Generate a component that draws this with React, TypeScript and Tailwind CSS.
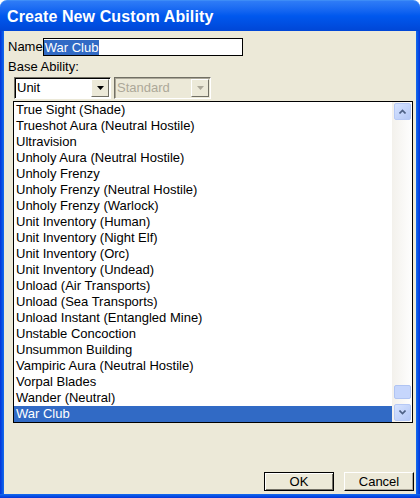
import React from "react"

const items = [
  "True Sight (Shade)",
  "Trueshot Aura (Neutral Hostile)",
  "Ultravision",
  "Unholy Aura (Neutral Hostile)",
  "Unholy Frenzy",
  "Unholy Frenzy (Neutral Hostile)",
  "Unholy Frenzy (Warlock)",
  "Unit Inventory (Human)",
  "Unit Inventory (Night Elf)",
  "Unit Inventory (Orc)",
  "Unit Inventory (Undead)",
  "Unload (Air Transports)",
  "Unload (Sea Transports)",
  "Unload Instant (Entangled Mine)",
  "Unstable Concoction",
  "Unsummon Building",
  "Vampiric Aura (Neutral Hostile)",
  "Vorpal Blades",
  "Wander (Neutral)",
  "War Club",
]

function Arrow({ color = "#000" }: { color?: string }) {
  return (
    <svg width="7" height="4" viewBox="0 0 7 4">
      <path d="M0 0h7L3.5 4z" fill={color} />
    </svg>
  )
}

function ComboButton({ disabled }: { disabled?: boolean }) {
  return (
    <div className="w-[18px] h-[18px] bg-[#ece9d8] border border-t-white border-l-white border-r-[#716f64] border-b-[#716f64] flex items-center justify-center">
      <Arrow color={disabled ? "#aca899" : "#000"} />
    </div>
  )
}

function ScrollBtn({ up }: { up?: boolean }) {
  return (
    <div className="w-[17px] h-[17px] rounded-[2px] border border-[#b6c9f5] bg-gradient-to-br from-[#d6e3ff] to-[#b4c8f6] flex items-center justify-center">
      <svg width="7" height="5" viewBox="0 0 7 5">
        <path
          d={up ? "M0.5 4.5L3.5 1.5L6.5 4.5" : "M0.5 0.5L3.5 3.5L6.5 0.5"}
          stroke="#4d6185"
          strokeWidth="1.6"
          fill="none"
        />
      </svg>
    </div>
  )
}

function PushButton({ label, primary }: { label: string; primary?: boolean }) {
  return (
    <div
      className={
        "w-[70px] h-[19px] bg-[#ece9d8] flex items-center justify-center text-[13px] leading-none " +
        (primary
          ? "border border-black shadow-[inset_1px_1px_0_#fff,inset_-1px_-1px_0_#716f64]"
          : "border border-t-white border-l-white border-r-black border-b-black shadow-[inset_-1px_-1px_0_#aca899]")
      }
    >
      {label}
    </div>
  )
}

export default function App() {
  return (
    <div
      className="w-[420px] h-[498px] flex flex-col bg-white text-black"
      style={{ fontFamily: '"Liberation Sans", Arial, sans-serif' }}
    >
      <div className="h-[31px] shrink-0 rounded-t-[7px] bg-gradient-to-b from-[#2f7cf6] via-[#0058ee] to-[#0046d6] border-t border-[#3d8cf7] flex items-center pl-[7px]">
        <span className="text-white font-bold text-[16px] tracking-[0.1px] pt-[1px]">
          Create New Custom Ability
        </span>
      </div>

      <div className="flex flex-1">
        <div className="w-[4px] bg-gradient-to-r from-[#0831d9] to-[#166aee]" />
        <div className="flex-1 bg-[#ece9d8] flex flex-col text-[13px]">
          <div className="flex items-center mt-[7px] ml-[4px] h-[18px]">
            <span>Name</span>
            <div className="w-[200px] h-[18px] bg-white border border-black flex items-center">
              <span className="bg-[#316ac5] text-white leading-[15px] px-[1px]">War Club</span>
            </div>
          </div>

          <div className="ml-[4px] mt-[3px] leading-[16px]">Base Ability:</div>

          <div className="flex mt-[2px] ml-[10px] gap-[3px]">
            <div className="w-[97px] h-[22px] bg-white border border-t-[#716f64] border-l-[#716f64] border-r-white border-b-white flex items-center justify-between pl-[2px] pr-[1px] shadow-[inset_1px_1px_0_#000]">
              <span>Unit</span>
              <ComboButton />
            </div>
            <div className="w-[97px] h-[22px] bg-[#ece9d8] border border-t-[#716f64] border-l-[#716f64] border-r-white border-b-white flex items-center justify-between pl-[2px] pr-[1px] shadow-[inset_1px_1px_0_#aca899]">
              <span className="text-[#aca899]">Standard</span>
              <ComboButton disabled />
            </div>
          </div>

          <div className="ml-[9px] mt-[2px] w-[400px] h-[322px] bg-white border border-black flex">
            <div className="flex-1 flex flex-col">
              {items.map((item, i) => (
                <div
                  key={item}
                  className={
                    "h-[16px] leading-[16px] pl-[2px] whitespace-nowrap " +
                    (i === items.length - 1 ? "bg-[#316ac5] text-white" : "")
                  }
                >
                  {item}
                </div>
              ))}
            </div>
            <div className="w-[20px] bg-gradient-to-r from-[#f3f1ec] to-[#fefefe] flex flex-col items-center pt-[1px] pb-[1px]">
              <ScrollBtn up />
              <div className="flex-1 w-full flex flex-col justify-end items-center pb-[5px]">
                <div className="w-[17px] h-[14px] rounded-[2px] border border-[#b0c4f2] bg-[#c6d6fc]" />
              </div>
              <ScrollBtn />
            </div>
          </div>

          <div className="flex-1" />
          <div className="flex justify-end gap-[10px] mr-[2px] mb-[3px]">
            <PushButton label="OK" primary />
            <PushButton label="Cancel" />
          </div>
        </div>
        <div className="w-[4px] bg-gradient-to-r from-[#166aee] to-[#0831d9]" />
      </div>
      <div className="h-[4px] shrink-0 bg-gradient-to-b from-[#166aee] to-[#0831d9]" />
    </div>
  )
}
